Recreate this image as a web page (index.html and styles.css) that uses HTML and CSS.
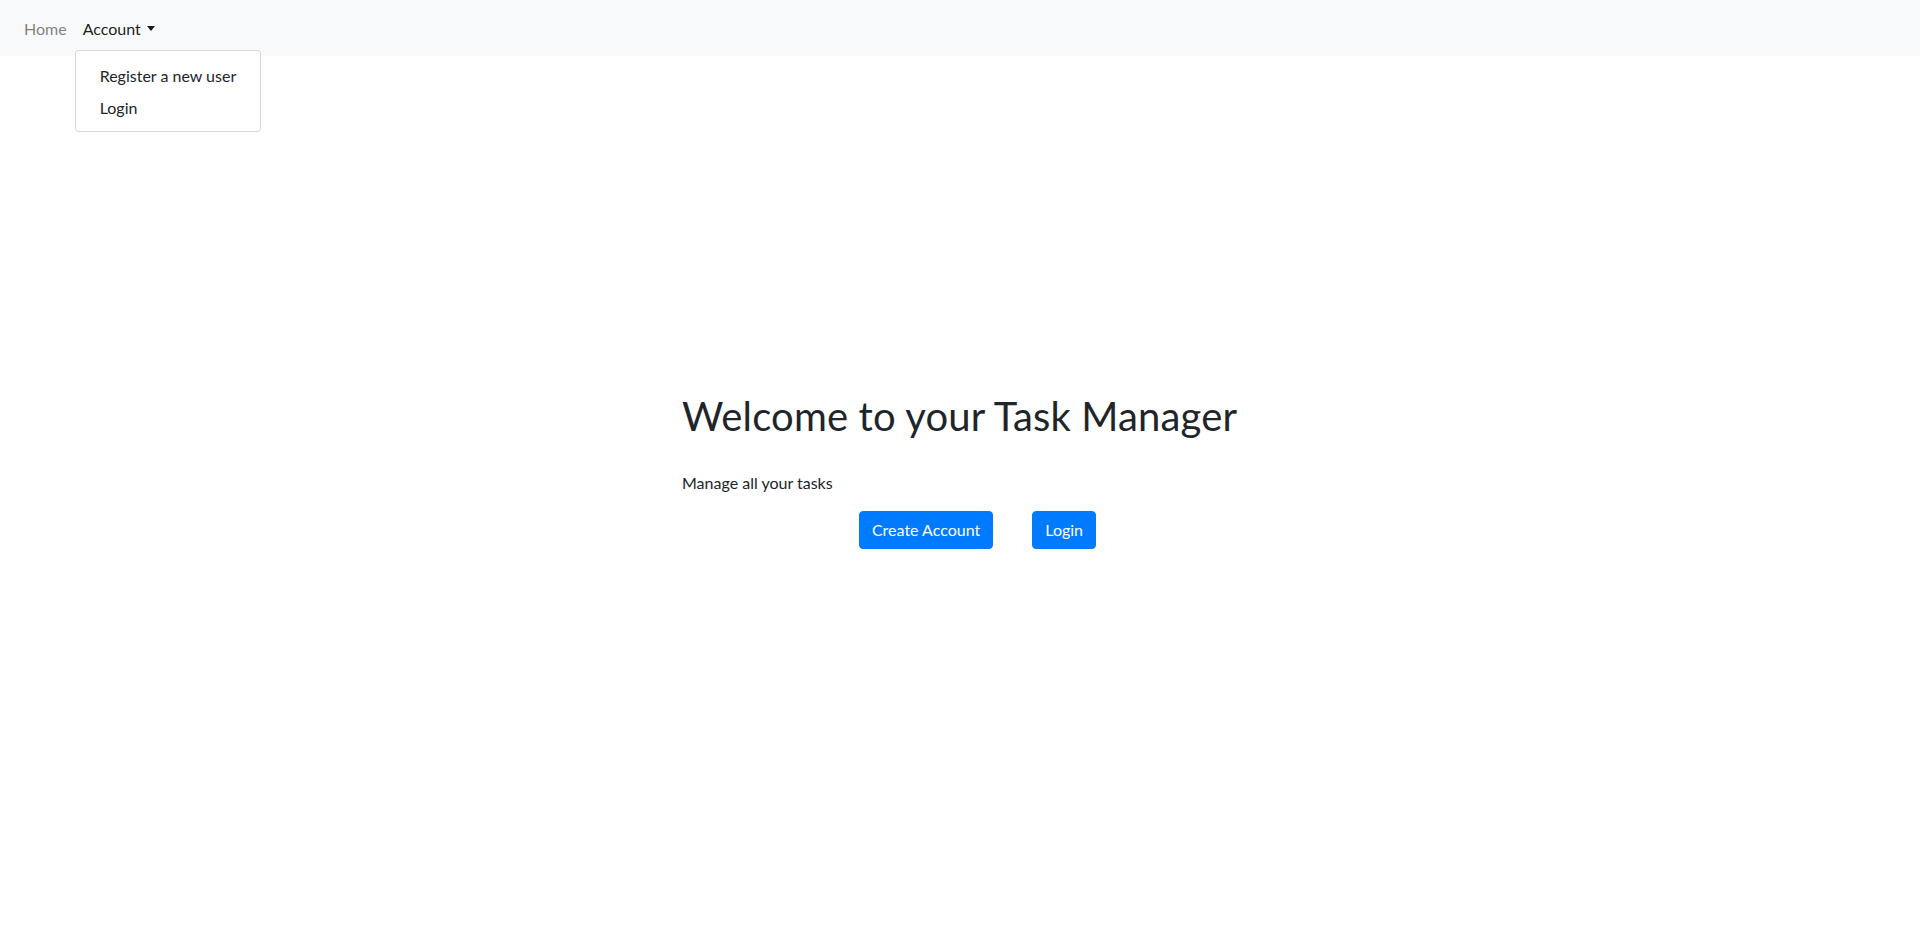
FILE: index.html
```html
<!DOCTYPE html>
<html lang="en">
<head>
<meta charset="utf-8">
<title>Task Manager</title>
<link rel="stylesheet" href="styles.css">
</head>
<body>
<nav class="navbar">
  <ul class="nav-list">
    <li class="nav-item"><a class="nav-link muted" href="#">Home</a></li>
    <li class="nav-item dropdown">
      <a class="nav-link active" href="#">Account<span class="caret"></span></a>
      <div class="dropdown-menu">
        <a class="dropdown-item" href="#">Register a new user</a>
        <a class="dropdown-item" href="#">Login</a>
      </div>
    </li>
  </ul>
</nav>
<main class="main">
  <section class="hero">
    <h1 class="title">Welcome to your Task Manager</h1>
    <p class="lead">Manage all your tasks</p>
    <div class="actions">
      <a class="btn btn-create" href="#">Create Account</a>
      <a class="btn" href="#">Login</a>
    </div>
  </section>
</main>
</body>
</html>
```
FILE: styles.css
```css
* { box-sizing: border-box; }
html, body { margin: 0; padding: 0; }
body {
  font-family: Lato, "Open Sans", sans-serif;
  font-size: 16px;
  line-height: 1.5;
  color: #212529;
  background: #fff;
}
a { text-decoration: none; }

.navbar {
  background: #f8f9fa;
  height: 56px;
  padding: 8px 16px;
}
.nav-list {
  list-style: none;
  margin: 0;
  padding: 0;
  display: flex;
}
.nav-item { position: relative; }
.nav-link {
  display: block;
  padding: 9px 8px 7px;
  line-height: 24px;
  color: rgba(0,0,0,.5);
}
.nav-link.active { color: rgba(0,0,0,.9); }
.caret {
  display: inline-block;
  margin-left: 6px;
  vertical-align: 4px;
  border-top: 5px solid rgba(0,0,0,.9);
  border-left: 4.5px solid transparent;
  border-right: 4.5px solid transparent;
}
.dropdown-menu {
  position: absolute;
  top: 100%;
  left: 0;
  margin-top: 2px;
  min-width: 160px;
  padding: 8px 0;
  background: #fff;
  border: 1px solid rgba(0,0,0,.15);
  border-radius: 4px;
  z-index: 10;
}
.dropdown-item {
  display: block;
  padding: 5px 24px 3px;
  line-height: 24px;
  color: #212529;
  white-space: nowrap;
}

.main { padding-top: 336px; }
.hero {
  width: 556px;
  margin: 0 auto;
}
.title {
  margin: 0 0 31px;
  font-size: 40px;
  font-weight: 400;
  line-height: 48px;
  letter-spacing: 0.15px;
}
.lead {
  margin: 0 0 16px;
  line-height: 24px;
}
.actions {
  display: flex;
  justify-content: center;
  gap: 39px;
  padding-left: 35px;
}
.btn {
  display: inline-block;
  padding: 6px 12px;
  line-height: 24px;
  border: 1px solid #007bff;
  border-radius: 4px;
  background: #007bff;
  color: #fff;
}
```
